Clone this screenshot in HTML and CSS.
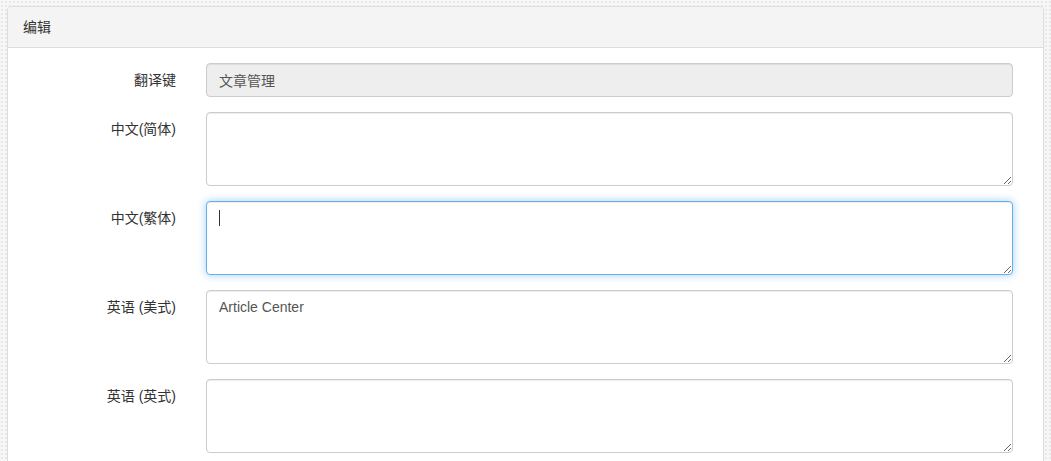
FILE: index.html
```html
<!DOCTYPE html>
<html lang="zh-CN">
<head>
<meta charset="utf-8">
<title>编辑</title>
<link rel="stylesheet" href="styles.css">
</head>
<body>
<div class="panel">
  <div class="panel-heading">编辑</div>
  <div class="panel-body">
    <form class="form">
      <div class="form-row">
        <label class="form-label">翻译键</label>
        <input class="form-control" type="text" value="文章管理" readonly>
      </div>
      <div class="form-row">
        <label class="form-label">中文(简体)</label>
        <textarea class="form-control area"></textarea>
      </div>
      <div class="form-row">
        <label class="form-label">中文(繁体)</label>
        <div class="field-wrap">
          <textarea class="form-control area is-focus"></textarea>
          <span class="caret"></span>
        </div>
      </div>
      <div class="form-row">
        <label class="form-label">英语 (美式)</label>
        <textarea class="form-control area">Article Center</textarea>
      </div>
      <div class="form-row">
        <label class="form-label">英语 (英式)</label>
        <textarea class="form-control area"></textarea>
      </div>
    </form>
  </div>
</div>
</body>
</html>
```

FILE: styles.css
```css
* { box-sizing: border-box; }
html, body { height: 100%; }
body {
  margin: 0;
  padding: 6px 7px 0 7px;
  font-family: "Liberation Sans", Arial, "Noto Sans CJK SC", sans-serif;
  font-size: 14px;
  line-height: 20px;
  color: #333;
  background-color: #f7f7f7;
  background-image: radial-gradient(circle, #e8e8e8 0.8px, transparent 1.2px);
  background-size: 4px 4px;
  overflow: hidden;
}
.panel {
  width: 1037px;
  background: #fff;
  border: 1px solid #ddd;
  border-radius: 4px;
  box-shadow: 0 1px 1px rgba(0,0,0,.05);
}
.panel-heading {
  padding: 10px 15px;
  background: #f4f4f4;
  border-bottom: 1px solid #ddd;
  border-radius: 3px 3px 0 0;
  color: #333;
}
.panel-body {
  padding: 15px 30px 15px 15px;
}
.form-row {
  display: grid;
  grid-template-columns: 153px 1fr;
  column-gap: 30px;
  margin-bottom: 15px;
}
.form-label {
  text-align: right;
  padding-top: 7px;
  color: #333;
}
.form-control {
  display: block;
  width: 100%;
  height: 34px;
  padding: 6px 12px;
  font-family: "Liberation Sans", Arial, "Noto Sans CJK SC", sans-serif;
  font-size: 14px;
  line-height: 20px;
  color: #555;
  background: #fff;
  border: 1px solid #ccc;
  border-radius: 4px;
  box-shadow: inset 0 1px 1px rgba(0,0,0,.075);
  outline: none;
  margin: 0;
}
.form-control[readonly] {
  background: #eee;
}
.area {
  height: 74px;
  resize: vertical;
}
.field-wrap {
  position: relative;
}
.is-focus {
  border-color: #66afe9;
  box-shadow: inset 0 1px 1px rgba(0,0,0,.075), 0 0 8px rgba(102,175,233,.6);
}
.caret {
  position: absolute;
  left: 13px;
  top: 9px;
  width: 1px;
  height: 16px;
  background: #333;
}
```
